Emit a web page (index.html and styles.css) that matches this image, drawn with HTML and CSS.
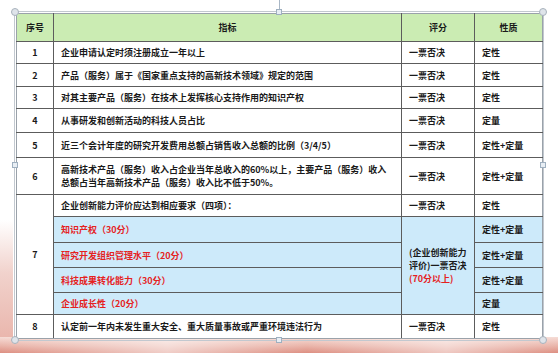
FILE: index.html
```html
<!DOCTYPE html>
<html lang="zh">
<head>
<meta charset="utf-8">
<link rel="stylesheet" href="styles.css">
</head>
<body>
<div class="slide">
  <div class="swoosh-left"></div>
  <div class="swoosh-bottom"></div>
  <div class="frame">
    <span class="rot-line"></span>
    <span class="h sq tc"></span>
    <span class="h ci tl"></span>
    <span class="h ci tr"></span>
    <span class="h sq ml"></span>
    <span class="h sq mr"></span>
    <span class="h ci bl"></span>
    <span class="h ci br"></span>
    <span class="h sq bc"></span>
    <table class="grid">
      <colgroup>
        <col class="c-no"><col class="c-idx"><col class="c-score"><col class="c-type">
      </colgroup>
      <thead>
        <tr class="hd"><th>序号</th><th>指标</th><th>评分</th><th>性质</th></tr>
      </thead>
      <tbody>
        <tr class="r22"><td class="no">1</td><td>企业申请认定时须注册成立一年以上</td><td>一票否决</td><td>定性</td></tr>
        <tr class="r23"><td class="no">2</td><td>产品（服务）属于《国家重点支持的高新技术领域》规定的范围</td><td>一票否决</td><td>定性</td></tr>
        <tr class="r22"><td class="no">3</td><td>对其主要产品（服务）在技术上发挥核心支持作用的知识产权</td><td>一票否决</td><td>定性</td></tr>
        <tr class="r24"><td class="no">4</td><td>从事研发和创新活动的科技人员占比</td><td>一票否决</td><td>定量</td></tr>
        <tr class="r25"><td class="no">5</td><td>近三个会计年度的研究开发费用总额占销售收入总额的比例（3/4/5）</td><td>一票否决</td><td>定性+定量</td></tr>
        <tr class="r37"><td class="no">6</td><td>高新技术产品（服务）收入占企业当年总收入的60%以上，主要产品（服务）收入<br>总额占当年高新技术产品（服务）收入比不低于50%。</td><td>一票否决</td><td>定性+定量</td></tr>
        <tr class="r22"><td class="no" rowspan="5">7</td><td>企业创新能力评价应达到相应要求（四项）：</td><td>一票否决</td><td>定性</td></tr>
        <tr class="r26 blue"><td class="red">知识产权（30分）</td><td rowspan="4" class="merged">(企业创新能力<br>评价)一票否决<br><span class="red">(70分以上)</span></td><td>定性+定量</td></tr>
        <tr class="r25 blue"><td class="red">研究开发组织管理水平（20分）</td><td>定性+定量</td></tr>
        <tr class="r25 blue"><td class="red">科技成果转化能力（30分）</td><td>定性+定量</td></tr>
        <tr class="r22 blue"><td class="red">企业成长性（20分）</td><td>定量</td></tr>
        <tr class="r24"><td class="no">8</td><td>认定前一年内未发生重大安全、重大质量事故或严重环境违法行为</td><td>一票否决</td><td>定性</td></tr>
      </tbody>
    </table>
  </div>
</div>
</body>
</html>
```

FILE: styles.css
```css
html, body {
  margin: 0;
  padding: 0;
  background: #ffffff;
}

.slide {
  position: relative;
  width: 558px;
  height: 353px;
  overflow: hidden;
  padding: 13px 0 0 16px;
  box-sizing: border-box;
  background: #ffffff;
}

.swoosh-left {
  position: absolute;
  left: 0;
  top: 220px;
  width: 13px;
  height: 133px;
  background: linear-gradient(to bottom, rgba(245, 225, 222, 0) 0%, #f1d2cc 40%, #e8b0a6 100%);
}

.swoosh-bottom {
  position: absolute;
  left: 0;
  bottom: 0;
  width: 558px;
  height: 16px;
  background:
    linear-gradient(to right, rgba(255,255,255,0) 0%, rgba(255,255,255,0.55) 30%, rgba(255,255,255,0) 55%, rgba(255,255,255,0.5) 80%, rgba(255,255,255,0) 100%),
    linear-gradient(to bottom, #f6dcd6 0%, #eab5aa 55%, #dd8f82 100%);
}

.frame {
  position: relative;
  width: 526px;
  outline: 1px solid #c2c8cf;
  outline-offset: 1px;
}

.grid {
  width: 526px;
  border-collapse: collapse;
  table-layout: fixed;
  font-family: "Noto Sans CJK SC", "Noto Sans", sans-serif;
  font-size: 9px;
  font-weight: bold;
  color: #1a1a1a;
  background: #ffffff;
  position: relative;
}

.c-no { width: 37px; }
.c-idx { width: 348px; }
.c-score { width: 73px; }
.c-type { width: 68px; }

.grid th,
.grid td {
  border: 1px solid #5c5c5c;
  padding: 0 4px 0 7px;
  text-align: left;
  vertical-align: middle;
  line-height: 13px;
  white-space: nowrap;
}

.grid tr > :first-child { border-left-color: #9aa2aa; }
.grid tr > :last-child { border-right-color: #9aa2aa; }
.grid thead th { border-top-color: #9aa2aa; }
.grid tbody tr:last-child td { border-bottom-color: #9aa2aa; }

.grid th {
  background: #cbecb3;
  text-align: center;
  padding: 0;
  height: 27px;
}

.grid td.no {
  text-align: center;
  padding: 0;
  background: #ffffff;
}

.r22 td { height: 21px; }
.r23 td { height: 22px; }
.r24 td { height: 23px; }
.r25 td { height: 24px; }
.r26 td { height: 25px; }
.r37 td { height: 36px; }

.blue td { background: #cdeafa; }

.red { color: #e5221f; }

.merged {
  line-height: 14px;
}

.rot-line {
  position: absolute;
  left: 263px;
  top: -13px;
  width: 1px;
  height: 11px;
  background: #a9b7c6;
  z-index: 3;
}

.h {
  position: absolute;
  z-index: 3;
  box-sizing: border-box;
  border: 1px solid #9fb0c0;
  background: #e8eef4;
}

.sq { width: 6px; height: 6px; }
.ci { width: 8px; height: 8px; border-radius: 50%; background: #dfe4ea; border-color: #a8b2bc; }

.tc { left: 260px; top: -4px; }
.tl { left: -5px; top: -5px; }
.tr { right: -5px; top: -5px; }
.ml { left: -4px; top: 149px; }
.mr { right: -4px; top: 149px; }
.bl { left: -5px; bottom: -5px; }
.br { right: -5px; bottom: -5px; }
.bc { left: 260px; bottom: -4px; }
```
